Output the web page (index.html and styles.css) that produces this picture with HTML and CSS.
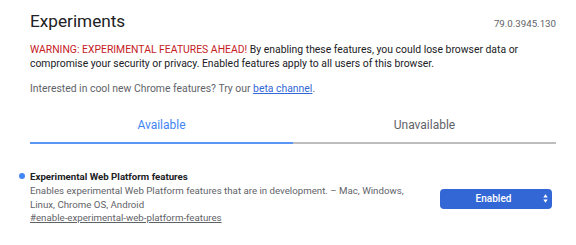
FILE: index.html
```html
<!DOCTYPE html>
<html lang="en">
<head>
    <meta charset="UTF-8">
    <title>Experiments</title>
    <link rel="stylesheet" href="styles.css">
</head>
<body>
<div id="page">
    <div class="header">
        <h1>Experiments</h1>
        <span class="version">79.0.3945.130</span>
    </div>
    <p class="warning">
        <span class="warn-red">WARNING: EXPERIMENTAL FEATURES AHEAD!</span>
        By enabling these features, you could lose browser data or compromise your security or privacy. Enabled features apply to all users of this browser.
    </p>
    <p class="promo">Interested in cool new Chrome features? Try our <a href="#">beta channel</a>.</p>
    <div class="tabs">
        <div class="tab selected">Available</div>
        <div class="tab">Unavailable</div>
    </div>
    <div class="experiment">
        <div class="experiment-info">
            <h2 class="experiment-name">Experimental Web Platform features</h2>
            <p class="description">Enables experimental Web Platform features that are in development. – Mac, Windows, Linux, Chrome OS, Android</p>
            <a class="permalink" href="#">#enable-experimental-web-platform-features</a>
        </div>
        <div class="experiment-actions">
            <div class="select">
                <span>Enabled</span>
                <svg class="arrows" width="5" height="9" viewBox="0 0 5 9">
                    <path d="M2.5 0.3 L4.7 3.6 H0.3 Z M2.5 8.7 L4.7 5.4 H0.3 Z" fill="#fff"/>
                </svg>
            </div>
        </div>
    </div>
</div>
</body>
</html>
```

FILE: styles.css
```css
* {
    margin: 0;
    padding: 0;
}

body {
    font-family: Roboto, "Liberation Sans", sans-serif;
    font-size: 10.4px;
    color: #202124;
    background: #fff;
}

#page {
    padding: 0 20px 0 30px;
}

.header {
    display: flex;
    justify-content: space-between;
    align-items: baseline;
    padding-top: 9px;
}

.header h1 {
    font-size: 17.2px;
    font-weight: 400;
    line-height: 24px;
}

.version {
    color: #5f6368;
    font-size: 9.7px;
}

.warning {
    margin-top: 9.5px;
    line-height: 14px;
}

.warn-red {
    color: #c5221f;
}

.promo {
    margin-top: 11.6px;
    color: #5f6368;
    line-height: 14px;
}

.promo a {
    color: #3367d6;
}

.tabs {
    display: flex;
    margin-top: 15px;
}

.tab {
    flex: 1;
    text-align: center;
    font-size: 12px;
    color: #5f6368;
    line-height: 28px;
    padding-bottom: 3px;
    border-bottom: 2px solid #bdbdbd;
}

.tab.selected {
    color: #4285f4;
    border-bottom-color: #5a95f5;
}

.experiment {
    display: flex;
    align-items: flex-start;
    margin-top: 26.4px;
    font-size: 9.7px;
    line-height: 13.6px;
}

.experiment-info {
    width: 385px;
}

.experiment-name {
    position: relative;
    font-size: 9.7px;
    font-weight: 700;
}

.experiment-name:before {
    content: "";
    position: absolute;
    left: -11px;
    top: 2.7px;
    width: 6px;
    height: 6px;
    border-radius: 50%;
    background: #4285f4;
}

.description {
    color: #5f6368;
}

.permalink {
    color: #5f6368;
}

.experiment-actions {
    flex: 1;
    display: flex;
    justify-content: flex-end;
    padding-right: 4px;
}

.select {
    position: relative;
    width: 112px;
    height: 20px;
    margin-top: 18.4px;
    padding-right: 5px;
    box-sizing: border-box;
    background: #3367d6;
    border-radius: 4px;
    color: #fff;
    text-align: center;
    line-height: 20px;
    font-size: 10px;
    font-weight: 500;
}

.select .arrows {
    position: absolute;
    right: 4px;
    top: 5.5px;
}
```
